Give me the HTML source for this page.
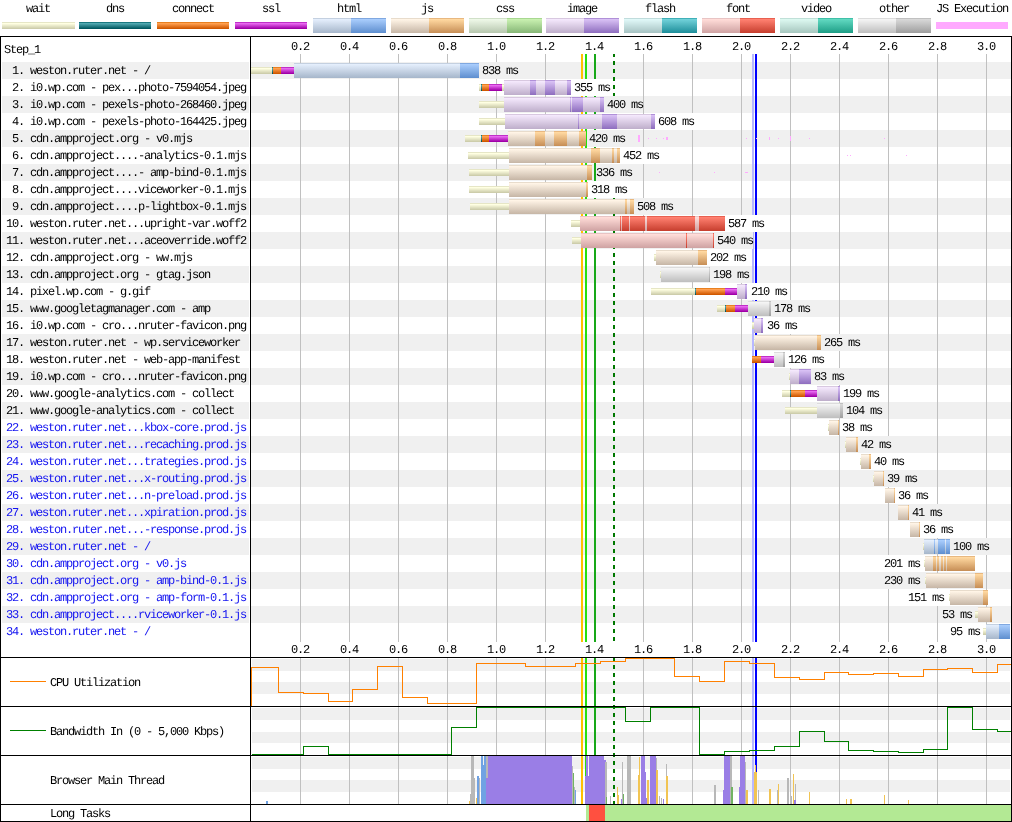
<!DOCTYPE html><html><head><meta charset="utf-8"><title>Waterfall</title><style>html,body{margin:0;padding:0;background:#fff;width:1012px;height:822px;overflow:hidden}svg{display:block;will-change:transform}text{white-space:pre;font-family:"Liberation Mono",monospace;text-rendering:geometricPrecision}</style></head><body><svg width="1012" height="822" viewBox="0 0 1012 822" shape-rendering="crispEdges" font-family='"Liberation Mono", monospace' font-size="12" letter-spacing="-1.2"><defs><linearGradient id="g_wait" x1="0" y1="0" x2="0" y2="1"><stop offset="0" stop-color="#e6e6c6"/><stop offset="0.0667" stop-color="#e6e6c6"/><stop offset="0.0668" stop-color="#ffffe2"/><stop offset="0.1" stop-color="#ffffe2"/><stop offset="0.9667" stop-color="#cdcdab"/><stop offset="1" stop-color="#cdcdab"/></linearGradient><linearGradient id="g_dns" x1="0" y1="0" x2="0" y2="1"><stop offset="0" stop-color="#1a7880"/><stop offset="0.0667" stop-color="#1a7880"/><stop offset="0.0668" stop-color="#50a8b0"/><stop offset="0.1" stop-color="#50a8b0"/><stop offset="0.9667" stop-color="#005860"/><stop offset="1" stop-color="#005860"/></linearGradient><linearGradient id="g_connect" x1="0" y1="0" x2="0" y2="1"><stop offset="0" stop-color="#e88020"/><stop offset="0.0667" stop-color="#e88020"/><stop offset="0.0668" stop-color="#ffa050"/><stop offset="0.1" stop-color="#ffa050"/><stop offset="0.9667" stop-color="#d05800"/><stop offset="1" stop-color="#d05800"/></linearGradient><linearGradient id="g_ssl" x1="0" y1="0" x2="0" y2="1"><stop offset="0" stop-color="#c030c8"/><stop offset="0.0667" stop-color="#c030c8"/><stop offset="0.0668" stop-color="#e868f0"/><stop offset="0.1" stop-color="#e868f0"/><stop offset="0.9667" stop-color="#a000a8"/><stop offset="1" stop-color="#a000a8"/></linearGradient><linearGradient id="g_html" x1="0" y1="0" x2="0" y2="1"><stop offset="0" stop-color="#c4d0e0"/><stop offset="0.0667" stop-color="#c4d0e0"/><stop offset="0.0668" stop-color="#e4eefc"/><stop offset="0.1" stop-color="#e4eefc"/><stop offset="0.9667" stop-color="#a8b8cc"/><stop offset="1" stop-color="#a8b8cc"/></linearGradient><linearGradient id="g_html_d" x1="0" y1="0" x2="0" y2="1"><stop offset="0" stop-color="#80a8e0"/><stop offset="0.0667" stop-color="#80a8e0"/><stop offset="0.0668" stop-color="#a8ccfc"/><stop offset="0.1" stop-color="#a8ccfc"/><stop offset="0.9667" stop-color="#6090d0"/><stop offset="1" stop-color="#6090d0"/></linearGradient><linearGradient id="g_js" x1="0" y1="0" x2="0" y2="1"><stop offset="0" stop-color="#e8dccc"/><stop offset="0.0667" stop-color="#e8dccc"/><stop offset="0.0668" stop-color="#fff4e6"/><stop offset="0.1" stop-color="#fff4e6"/><stop offset="0.9667" stop-color="#c8b8a8"/><stop offset="1" stop-color="#c8b8a8"/></linearGradient><linearGradient id="g_js_d" x1="0" y1="0" x2="0" y2="1"><stop offset="0" stop-color="#e8b880"/><stop offset="0.0667" stop-color="#e8b880"/><stop offset="0.0668" stop-color="#ffd8a0"/><stop offset="0.1" stop-color="#ffd8a0"/><stop offset="0.9667" stop-color="#c89058"/><stop offset="1" stop-color="#c89058"/></linearGradient><linearGradient id="g_css" x1="0" y1="0" x2="0" y2="1"><stop offset="0" stop-color="#d0e0c8"/><stop offset="0.0667" stop-color="#d0e0c8"/><stop offset="0.0668" stop-color="#eef8e8"/><stop offset="0.1" stop-color="#eef8e8"/><stop offset="0.9667" stop-color="#b8c8b0"/><stop offset="1" stop-color="#b8c8b0"/></linearGradient><linearGradient id="g_css_d" x1="0" y1="0" x2="0" y2="1"><stop offset="0" stop-color="#a8d890"/><stop offset="0.0667" stop-color="#a8d890"/><stop offset="0.0668" stop-color="#c8f0b0"/><stop offset="0.1" stop-color="#c8f0b0"/><stop offset="0.9667" stop-color="#88b878"/><stop offset="1" stop-color="#88b878"/></linearGradient><linearGradient id="g_image" x1="0" y1="0" x2="0" y2="1"><stop offset="0" stop-color="#d8c8e0"/><stop offset="0.0667" stop-color="#d8c8e0"/><stop offset="0.0668" stop-color="#f4e8fc"/><stop offset="0.1" stop-color="#f4e8fc"/><stop offset="0.9667" stop-color="#c0b0cc"/><stop offset="1" stop-color="#c0b0cc"/></linearGradient><linearGradient id="g_image_d" x1="0" y1="0" x2="0" y2="1"><stop offset="0" stop-color="#b090d8"/><stop offset="0.0667" stop-color="#b090d8"/><stop offset="0.0668" stop-color="#d8c0f4"/><stop offset="0.1" stop-color="#d8c0f4"/><stop offset="0.9667" stop-color="#9070c0"/><stop offset="1" stop-color="#9070c0"/></linearGradient><linearGradient id="g_flash" x1="0" y1="0" x2="0" y2="1"><stop offset="0" stop-color="#c0dcdc"/><stop offset="0.0667" stop-color="#c0dcdc"/><stop offset="0.0668" stop-color="#e0f8f8"/><stop offset="0.1" stop-color="#e0f8f8"/><stop offset="0.9667" stop-color="#a8c4c4"/><stop offset="1" stop-color="#a8c4c4"/></linearGradient><linearGradient id="g_flash_d" x1="0" y1="0" x2="0" y2="1"><stop offset="0" stop-color="#40b0b8"/><stop offset="0.0667" stop-color="#40b0b8"/><stop offset="0.0668" stop-color="#70d0d8"/><stop offset="0.1" stop-color="#70d0d8"/><stop offset="0.9667" stop-color="#20909c"/><stop offset="1" stop-color="#20909c"/></linearGradient><linearGradient id="g_font" x1="0" y1="0" x2="0" y2="1"><stop offset="0" stop-color="#e8c4c4"/><stop offset="0.0667" stop-color="#e8c4c4"/><stop offset="0.0668" stop-color="#ffdcd8"/><stop offset="0.1" stop-color="#ffdcd8"/><stop offset="0.9667" stop-color="#d0a4a4"/><stop offset="1" stop-color="#d0a4a4"/></linearGradient><linearGradient id="g_font_d" x1="0" y1="0" x2="0" y2="1"><stop offset="0" stop-color="#e86050"/><stop offset="0.0667" stop-color="#e86050"/><stop offset="0.0668" stop-color="#ff8070"/><stop offset="0.1" stop-color="#ff8070"/><stop offset="0.9667" stop-color="#c84030"/><stop offset="1" stop-color="#c84030"/></linearGradient><linearGradient id="g_video" x1="0" y1="0" x2="0" y2="1"><stop offset="0" stop-color="#c0e0d8"/><stop offset="0.0667" stop-color="#c0e0d8"/><stop offset="0.0668" stop-color="#dcf8f0"/><stop offset="0.1" stop-color="#dcf8f0"/><stop offset="0.9667" stop-color="#a8c8c0"/><stop offset="1" stop-color="#a8c8c0"/></linearGradient><linearGradient id="g_video_d" x1="0" y1="0" x2="0" y2="1"><stop offset="0" stop-color="#40c0a8"/><stop offset="0.0667" stop-color="#40c0a8"/><stop offset="0.0668" stop-color="#60d8c0"/><stop offset="0.1" stop-color="#60d8c0"/><stop offset="0.9667" stop-color="#20a088"/><stop offset="1" stop-color="#20a088"/></linearGradient><linearGradient id="g_other" x1="0" y1="0" x2="0" y2="1"><stop offset="0" stop-color="#dcdcdc"/><stop offset="0.0667" stop-color="#dcdcdc"/><stop offset="0.0668" stop-color="#f4f4f4"/><stop offset="0.1" stop-color="#f4f4f4"/><stop offset="0.9667" stop-color="#c0c0c0"/><stop offset="1" stop-color="#c0c0c0"/></linearGradient><linearGradient id="g_other_d" x1="0" y1="0" x2="0" y2="1"><stop offset="0" stop-color="#c0c0c0"/><stop offset="0.0667" stop-color="#c0c0c0"/><stop offset="0.0668" stop-color="#d8d8d8"/><stop offset="0.1" stop-color="#d8d8d8"/><stop offset="0.9667" stop-color="#a0a0a0"/><stop offset="1" stop-color="#a0a0a0"/></linearGradient><linearGradient id="s_wait" x1="0" y1="0" x2="0" y2="1"><stop offset="0" stop-color="#e6e6c6"/><stop offset="0.1428" stop-color="#e6e6c6"/><stop offset="0.143" stop-color="#ffffe2"/><stop offset="0.2143" stop-color="#ffffe2"/><stop offset="0.9286" stop-color="#cdcdab"/><stop offset="1" stop-color="#cdcdab"/></linearGradient><linearGradient id="s_dns" x1="0" y1="0" x2="0" y2="1"><stop offset="0" stop-color="#1a7880"/><stop offset="0.1428" stop-color="#1a7880"/><stop offset="0.143" stop-color="#50a8b0"/><stop offset="0.2143" stop-color="#50a8b0"/><stop offset="0.9286" stop-color="#005860"/><stop offset="1" stop-color="#005860"/></linearGradient><linearGradient id="s_connect" x1="0" y1="0" x2="0" y2="1"><stop offset="0" stop-color="#e88020"/><stop offset="0.1428" stop-color="#e88020"/><stop offset="0.143" stop-color="#ffa050"/><stop offset="0.2143" stop-color="#ffa050"/><stop offset="0.9286" stop-color="#d05800"/><stop offset="1" stop-color="#d05800"/></linearGradient><linearGradient id="s_ssl" x1="0" y1="0" x2="0" y2="1"><stop offset="0" stop-color="#c030c8"/><stop offset="0.1428" stop-color="#c030c8"/><stop offset="0.143" stop-color="#e868f0"/><stop offset="0.2143" stop-color="#e868f0"/><stop offset="0.9286" stop-color="#a000a8"/><stop offset="1" stop-color="#a000a8"/></linearGradient></defs><text x="26" y="12" fill="#000">wait</text><rect x="2" y="22" width="73" height="7" fill="url(#s_wait)"/><text x="106" y="12" fill="#000">dns</text><rect x="79" y="22" width="72" height="7" fill="url(#s_dns)"/><text x="172" y="12" fill="#000">connect</text><rect x="157" y="22" width="72" height="7" fill="url(#s_connect)"/><text x="262" y="12" fill="#000">ssl</text><rect x="235" y="22" width="72" height="7" fill="url(#s_ssl)"/><text x="337" y="12" fill="#000">html</text><rect x="313" y="18" width="38" height="15" fill="url(#g_html)"/><rect x="351" y="18" width="35" height="15" fill="url(#g_html_d)"/><text x="421" y="12" fill="#000">js</text><rect x="391" y="18" width="38" height="15" fill="url(#g_js)"/><rect x="429" y="18" width="35" height="15" fill="url(#g_js_d)"/><text x="496" y="12" fill="#000">css</text><rect x="469" y="18" width="38" height="15" fill="url(#g_css)"/><rect x="507" y="18" width="35" height="15" fill="url(#g_css_d)"/><text x="567" y="12" fill="#000">image</text><rect x="546" y="18" width="38" height="15" fill="url(#g_image)"/><rect x="584" y="18" width="35" height="15" fill="url(#g_image_d)"/><text x="645" y="12" fill="#000">flash</text><rect x="624" y="18" width="38" height="15" fill="url(#g_flash)"/><rect x="662" y="18" width="35" height="15" fill="url(#g_flash_d)"/><text x="726" y="12" fill="#000">font</text><rect x="702" y="18" width="38" height="15" fill="url(#g_font)"/><rect x="740" y="18" width="35" height="15" fill="url(#g_font_d)"/><text x="801" y="12" fill="#000">video</text><rect x="780" y="18" width="38" height="15" fill="url(#g_video)"/><rect x="818" y="18" width="35" height="15" fill="url(#g_video_d)"/><text x="879" y="12" fill="#000">other</text><rect x="858" y="18" width="38" height="15" fill="url(#g_other)"/><rect x="896" y="18" width="35" height="15" fill="url(#g_other_d)"/><text x="936" y="12" fill="#000">JS Execution</text><rect x="936" y="22" width="72" height="7" fill="#ffaaff"/><rect x="2" y="62" width="247" height="17" fill="#f0f0f0"/><rect x="251" y="62" width="760" height="17" fill="#f0f0f0"/><rect x="2" y="96" width="247" height="17" fill="#f0f0f0"/><rect x="251" y="96" width="760" height="17" fill="#f0f0f0"/><rect x="2" y="130" width="247" height="17" fill="#f0f0f0"/><rect x="251" y="130" width="760" height="17" fill="#f0f0f0"/><rect x="2" y="164" width="247" height="17" fill="#f0f0f0"/><rect x="251" y="164" width="760" height="17" fill="#f0f0f0"/><rect x="2" y="198" width="247" height="17" fill="#f0f0f0"/><rect x="251" y="198" width="760" height="17" fill="#f0f0f0"/><rect x="2" y="232" width="247" height="17" fill="#f0f0f0"/><rect x="251" y="232" width="760" height="17" fill="#f0f0f0"/><rect x="2" y="266" width="247" height="17" fill="#f0f0f0"/><rect x="251" y="266" width="760" height="17" fill="#f0f0f0"/><rect x="2" y="300" width="247" height="17" fill="#f0f0f0"/><rect x="251" y="300" width="760" height="17" fill="#f0f0f0"/><rect x="2" y="334" width="247" height="17" fill="#f0f0f0"/><rect x="251" y="334" width="760" height="17" fill="#f0f0f0"/><rect x="2" y="368" width="247" height="17" fill="#f0f0f0"/><rect x="251" y="368" width="760" height="17" fill="#f0f0f0"/><rect x="2" y="402" width="247" height="17" fill="#f0f0f0"/><rect x="251" y="402" width="760" height="17" fill="#f0f0f0"/><rect x="2" y="436" width="247" height="17" fill="#f0f0f0"/><rect x="251" y="436" width="760" height="17" fill="#f0f0f0"/><rect x="2" y="470" width="247" height="17" fill="#f0f0f0"/><rect x="251" y="470" width="760" height="17" fill="#f0f0f0"/><rect x="2" y="504" width="247" height="17" fill="#f0f0f0"/><rect x="251" y="504" width="760" height="17" fill="#f0f0f0"/><rect x="2" y="538" width="247" height="17" fill="#f0f0f0"/><rect x="251" y="538" width="760" height="17" fill="#f0f0f0"/><rect x="2" y="572" width="247" height="17" fill="#f0f0f0"/><rect x="251" y="572" width="760" height="17" fill="#f0f0f0"/><rect x="2" y="606" width="247" height="17" fill="#f0f0f0"/><rect x="251" y="606" width="760" height="17" fill="#f0f0f0"/><rect x="252" y="659" width="758" height="12" fill="#f0f0f0"/><rect x="252" y="682" width="758" height="12" fill="#f0f0f0"/><rect x="252" y="708" width="758" height="12" fill="#f0f0f0"/><rect x="252" y="732" width="758" height="11" fill="#f0f0f0"/><rect x="252" y="757" width="758" height="12" fill="#f0f0f0"/><rect x="252" y="780" width="758" height="12" fill="#f0f0f0"/><rect x="300" y="54" width="1" height="588" fill="#c0c0c0"/><rect x="300" y="658" width="1" height="146" fill="#c0c0c0"/><rect x="349" y="54" width="1" height="588" fill="#c0c0c0"/><rect x="349" y="658" width="1" height="146" fill="#c0c0c0"/><rect x="398" y="54" width="1" height="588" fill="#c0c0c0"/><rect x="398" y="658" width="1" height="146" fill="#c0c0c0"/><rect x="447" y="54" width="1" height="588" fill="#c0c0c0"/><rect x="447" y="658" width="1" height="146" fill="#c0c0c0"/><rect x="496" y="54" width="1" height="588" fill="#c0c0c0"/><rect x="496" y="658" width="1" height="146" fill="#c0c0c0"/><rect x="545" y="54" width="1" height="588" fill="#c0c0c0"/><rect x="545" y="658" width="1" height="146" fill="#c0c0c0"/><rect x="594" y="54" width="1" height="588" fill="#c0c0c0"/><rect x="594" y="658" width="1" height="146" fill="#c0c0c0"/><rect x="643" y="54" width="1" height="588" fill="#c0c0c0"/><rect x="643" y="658" width="1" height="146" fill="#c0c0c0"/><rect x="692" y="54" width="1" height="588" fill="#c0c0c0"/><rect x="692" y="658" width="1" height="146" fill="#c0c0c0"/><rect x="741" y="54" width="1" height="588" fill="#c0c0c0"/><rect x="741" y="658" width="1" height="146" fill="#c0c0c0"/><rect x="790" y="54" width="1" height="588" fill="#c0c0c0"/><rect x="790" y="658" width="1" height="146" fill="#c0c0c0"/><rect x="839" y="54" width="1" height="588" fill="#c0c0c0"/><rect x="839" y="658" width="1" height="146" fill="#c0c0c0"/><rect x="888" y="54" width="1" height="588" fill="#c0c0c0"/><rect x="888" y="658" width="1" height="146" fill="#c0c0c0"/><rect x="937" y="54" width="1" height="588" fill="#c0c0c0"/><rect x="937" y="658" width="1" height="146" fill="#c0c0c0"/><rect x="986" y="54" width="1" height="588" fill="#c0c0c0"/><rect x="986" y="658" width="1" height="146" fill="#c0c0c0"/><rect x="581" y="54" width="2" height="588" fill="#ffc000"/><rect x="581" y="657" width="2" height="147" fill="#ffc000"/><rect x="585" y="54" width="2" height="588" fill="#28e010"/><rect x="585" y="657" width="2" height="147" fill="#28e010"/><rect x="594" y="54" width="2" height="588" fill="#18a818"/><rect x="594" y="657" width="2" height="147" fill="#18a818"/><rect x="613" y="54" width="2" height="3" fill="#007800"/><rect x="613" y="61" width="2" height="4" fill="#007800"/><rect x="613" y="69" width="2" height="4" fill="#007800"/><rect x="613" y="77" width="2" height="4" fill="#007800"/><rect x="613" y="85" width="2" height="4" fill="#007800"/><rect x="613" y="93" width="2" height="4" fill="#007800"/><rect x="613" y="101" width="2" height="4" fill="#007800"/><rect x="613" y="109" width="2" height="4" fill="#007800"/><rect x="613" y="117" width="2" height="4" fill="#007800"/><rect x="613" y="125" width="2" height="4" fill="#007800"/><rect x="613" y="133" width="2" height="4" fill="#007800"/><rect x="613" y="141" width="2" height="4" fill="#007800"/><rect x="613" y="149" width="2" height="4" fill="#007800"/><rect x="613" y="157" width="2" height="4" fill="#007800"/><rect x="613" y="165" width="2" height="4" fill="#007800"/><rect x="613" y="173" width="2" height="4" fill="#007800"/><rect x="613" y="181" width="2" height="4" fill="#007800"/><rect x="613" y="189" width="2" height="4" fill="#007800"/><rect x="613" y="197" width="2" height="4" fill="#007800"/><rect x="613" y="205" width="2" height="4" fill="#007800"/><rect x="613" y="213" width="2" height="4" fill="#007800"/><rect x="613" y="221" width="2" height="4" fill="#007800"/><rect x="613" y="229" width="2" height="4" fill="#007800"/><rect x="613" y="237" width="2" height="4" fill="#007800"/><rect x="613" y="245" width="2" height="4" fill="#007800"/><rect x="613" y="253" width="2" height="4" fill="#007800"/><rect x="613" y="261" width="2" height="4" fill="#007800"/><rect x="613" y="269" width="2" height="4" fill="#007800"/><rect x="613" y="277" width="2" height="4" fill="#007800"/><rect x="613" y="285" width="2" height="4" fill="#007800"/><rect x="613" y="293" width="2" height="4" fill="#007800"/><rect x="613" y="301" width="2" height="4" fill="#007800"/><rect x="613" y="309" width="2" height="4" fill="#007800"/><rect x="613" y="317" width="2" height="4" fill="#007800"/><rect x="613" y="325" width="2" height="4" fill="#007800"/><rect x="613" y="333" width="2" height="4" fill="#007800"/><rect x="613" y="341" width="2" height="4" fill="#007800"/><rect x="613" y="349" width="2" height="4" fill="#007800"/><rect x="613" y="357" width="2" height="4" fill="#007800"/><rect x="613" y="365" width="2" height="4" fill="#007800"/><rect x="613" y="373" width="2" height="4" fill="#007800"/><rect x="613" y="381" width="2" height="4" fill="#007800"/><rect x="613" y="389" width="2" height="4" fill="#007800"/><rect x="613" y="397" width="2" height="4" fill="#007800"/><rect x="613" y="405" width="2" height="4" fill="#007800"/><rect x="613" y="413" width="2" height="4" fill="#007800"/><rect x="613" y="421" width="2" height="4" fill="#007800"/><rect x="613" y="429" width="2" height="4" fill="#007800"/><rect x="613" y="437" width="2" height="4" fill="#007800"/><rect x="613" y="445" width="2" height="4" fill="#007800"/><rect x="613" y="453" width="2" height="4" fill="#007800"/><rect x="613" y="461" width="2" height="4" fill="#007800"/><rect x="613" y="469" width="2" height="4" fill="#007800"/><rect x="613" y="477" width="2" height="4" fill="#007800"/><rect x="613" y="485" width="2" height="4" fill="#007800"/><rect x="613" y="493" width="2" height="4" fill="#007800"/><rect x="613" y="501" width="2" height="4" fill="#007800"/><rect x="613" y="509" width="2" height="4" fill="#007800"/><rect x="613" y="517" width="2" height="4" fill="#007800"/><rect x="613" y="525" width="2" height="4" fill="#007800"/><rect x="613" y="533" width="2" height="4" fill="#007800"/><rect x="613" y="541" width="2" height="4" fill="#007800"/><rect x="613" y="549" width="2" height="4" fill="#007800"/><rect x="613" y="557" width="2" height="4" fill="#007800"/><rect x="613" y="565" width="2" height="4" fill="#007800"/><rect x="613" y="573" width="2" height="4" fill="#007800"/><rect x="613" y="581" width="2" height="4" fill="#007800"/><rect x="613" y="589" width="2" height="4" fill="#007800"/><rect x="613" y="597" width="2" height="4" fill="#007800"/><rect x="613" y="605" width="2" height="4" fill="#007800"/><rect x="613" y="613" width="2" height="4" fill="#007800"/><rect x="613" y="621" width="2" height="4" fill="#007800"/><rect x="613" y="629" width="2" height="4" fill="#007800"/><rect x="613" y="637" width="2" height="4" fill="#007800"/><rect x="613" y="657" width="2" height="4" fill="#007800"/><rect x="613" y="665" width="2" height="4" fill="#007800"/><rect x="613" y="673" width="2" height="4" fill="#007800"/><rect x="613" y="681" width="2" height="4" fill="#007800"/><rect x="613" y="689" width="2" height="4" fill="#007800"/><rect x="613" y="697" width="2" height="4" fill="#007800"/><rect x="613" y="705" width="2" height="4" fill="#007800"/><rect x="613" y="713" width="2" height="4" fill="#007800"/><rect x="613" y="721" width="2" height="4" fill="#007800"/><rect x="613" y="729" width="2" height="4" fill="#007800"/><rect x="613" y="737" width="2" height="4" fill="#007800"/><rect x="613" y="745" width="2" height="4" fill="#007800"/><rect x="613" y="753" width="2" height="4" fill="#007800"/><rect x="613" y="761" width="2" height="4" fill="#007800"/><rect x="613" y="769" width="2" height="4" fill="#007800"/><rect x="613" y="777" width="2" height="4" fill="#007800"/><rect x="613" y="785" width="2" height="4" fill="#007800"/><rect x="613" y="793" width="2" height="4" fill="#007800"/><rect x="613" y="801" width="2" height="3" fill="#007800"/><rect x="752" y="54" width="2" height="588" fill="#b8b8ff"/><rect x="752" y="657" width="2" height="147" fill="#b8b8ff"/><rect x="755" y="54" width="2" height="588" fill="#0000ff"/><rect x="755" y="657" width="2" height="147" fill="#0000ff"/><!--bars--><rect x="251" y="67" width="21" height="7" fill="url(#s_wait)"/><rect x="272" y="67" width="1" height="7" fill="url(#s_dns)"/><rect x="273" y="67" width="8" height="7" fill="url(#s_connect)"/><rect x="281" y="67" width="13" height="7" fill="url(#s_ssl)"/><rect x="294" y="63" width="185" height="15" fill="url(#g_html)"/><rect x="460" y="63" width="19" height="15" fill="url(#g_html_d)"/><rect x="482" y="62" width="36" height="17" fill="#f0f0f0"/><text x="482" y="74" fill="#000">838 ms</text><text x="6" y="74" fill="#000"> 1. weston.ruter.net - /</text><rect x="479" y="84" width="2" height="7" fill="url(#s_wait)"/><rect x="481" y="84" width="1" height="7" fill="url(#s_dns)"/><rect x="482" y="84" width="7" height="7" fill="url(#s_connect)"/><rect x="489" y="84" width="13" height="7" fill="url(#s_ssl)"/><rect x="502" y="84" width="2" height="7" fill="url(#s_wait)"/><rect x="504" y="80" width="67" height="15" fill="url(#g_image)"/><rect x="530" y="80" width="6" height="15" fill="url(#g_image_d)"/><rect x="545" y="80" width="10" height="15" fill="url(#g_image_d)"/><rect x="567" y="80" width="4" height="15" fill="url(#g_image_d)"/><rect x="574" y="79" width="36" height="17" fill="#ffffff"/><text x="574" y="91" fill="#000">355 ms</text><text x="6" y="91" fill="#000"> 2. i0.wp.com - pex...photo-7594054.jpeg</text><rect x="479" y="101" width="25" height="7" fill="url(#s_wait)"/><rect x="504" y="97" width="100" height="15" fill="url(#g_image)"/><rect x="570" y="97" width="1" height="15" fill="url(#g_image_d)"/><rect x="572" y="97" width="11" height="15" fill="url(#g_image_d)"/><rect x="600" y="97" width="4" height="15" fill="url(#g_image_d)"/><rect x="607" y="96" width="36" height="17" fill="#f0f0f0"/><text x="607" y="108" fill="#000">400 ms</text><text x="6" y="108" fill="#000"> 3. i0.wp.com - pexels-photo-268460.jpeg</text><rect x="479" y="118" width="26" height="7" fill="url(#s_wait)"/><rect x="505" y="114" width="150" height="15" fill="url(#g_image)"/><rect x="578" y="114" width="1" height="15" fill="url(#g_image_d)"/><rect x="602" y="114" width="15" height="15" fill="url(#g_image_d)"/><rect x="651" y="114" width="4" height="15" fill="url(#g_image_d)"/><rect x="658" y="113" width="36" height="17" fill="#ffffff"/><text x="658" y="125" fill="#000">608 ms</text><text x="6" y="125" fill="#000"> 4. i0.wp.com - pexels-photo-164425.jpeg</text><rect x="465" y="135" width="16" height="7" fill="url(#s_wait)"/><rect x="481" y="135" width="1" height="7" fill="url(#s_dns)"/><rect x="482" y="135" width="7" height="7" fill="url(#s_connect)"/><rect x="489" y="135" width="19" height="7" fill="url(#s_ssl)"/><rect x="508" y="131" width="78" height="15" fill="url(#g_js)"/><rect x="535" y="131" width="10" height="15" fill="url(#g_js_d)"/><rect x="554" y="131" width="13" height="15" fill="url(#g_js_d)"/><rect x="579" y="131" width="7" height="15" fill="url(#g_js_d)"/><rect x="589" y="130" width="36" height="17" fill="#f0f0f0"/><text x="589" y="142" fill="#000">420 ms</text><text x="6" y="142" fill="#000"> 5. cdn.ampproject.org - v0.mjs</text><rect x="468" y="152" width="41" height="7" fill="url(#s_wait)"/><rect x="509" y="148" width="111" height="15" fill="url(#g_js)"/><rect x="591" y="148" width="9" height="15" fill="url(#g_js_d)"/><rect x="612" y="148" width="2" height="15" fill="url(#g_js_d)"/><rect x="617" y="148" width="3" height="15" fill="url(#g_js_d)"/><rect x="623" y="147" width="36" height="17" fill="#ffffff"/><text x="623" y="159" fill="#000">452 ms</text><text x="6" y="159" fill="#000"> 6. cdn.ampproject....-analytics-0.1.mjs</text><rect x="469" y="169" width="40" height="7" fill="url(#s_wait)"/><rect x="509" y="165" width="83" height="15" fill="url(#g_js)"/><rect x="587" y="165" width="5" height="15" fill="url(#g_js_d)"/><rect x="596" y="164" width="36" height="17" fill="#f0f0f0"/><text x="596" y="176" fill="#000">336 ms</text><text x="6" y="176" fill="#000"> 7. cdn.ampproject....- amp-bind-0.1.mjs</text><rect x="469" y="186" width="40" height="7" fill="url(#s_wait)"/><rect x="509" y="182" width="79" height="15" fill="url(#g_js)"/><rect x="586" y="182" width="2" height="15" fill="url(#g_js_d)"/><rect x="591" y="181" width="36" height="17" fill="#ffffff"/><text x="591" y="193" fill="#000">318 ms</text><text x="6" y="193" fill="#000"> 8. cdn.ampproject....viceworker-0.1.mjs</text><rect x="470" y="203" width="39" height="7" fill="url(#s_wait)"/><rect x="509" y="199" width="125" height="15" fill="url(#g_js)"/><rect x="625" y="199" width="2" height="15" fill="url(#g_js_d)"/><rect x="630" y="199" width="4" height="15" fill="url(#g_js_d)"/><rect x="637" y="198" width="36" height="17" fill="#f0f0f0"/><text x="637" y="210" fill="#000">508 ms</text><text x="6" y="210" fill="#000"> 9. cdn.ampproject....p-lightbox-0.1.mjs</text><rect x="571" y="220" width="10" height="7" fill="url(#s_wait)"/><rect x="580" y="216" width="145" height="15" fill="url(#g_font)"/><rect x="620" y="216" width="1" height="15" fill="url(#g_font_d)"/><rect x="622" y="216" width="7" height="15" fill="url(#g_font_d)"/><rect x="630" y="216" width="15" height="15" fill="url(#g_font_d)"/><rect x="647" y="216" width="48" height="15" fill="url(#g_font_d)"/><rect x="699" y="216" width="26" height="15" fill="url(#g_font_d)"/><rect x="728" y="215" width="36" height="17" fill="#ffffff"/><text x="728" y="227" fill="#000">587 ms</text><text x="6" y="227" fill="#000">10. weston.ruter.net...upright-var.woff2</text><rect x="572" y="237" width="10" height="7" fill="url(#s_wait)"/><rect x="581" y="233" width="133" height="15" fill="url(#g_font)"/><rect x="686" y="233" width="1" height="15" fill="url(#g_font_d)"/><rect x="713" y="233" width="1" height="15" fill="url(#g_font_d)"/><rect x="717" y="232" width="36" height="17" fill="#f0f0f0"/><text x="717" y="244" fill="#000">540 ms</text><text x="6" y="244" fill="#000">11. weston.ruter.net...aceoverride.woff2</text><rect x="654" y="254" width="3" height="7" fill="url(#s_wait)"/><rect x="656" y="250" width="51" height="15" fill="url(#g_js)"/><rect x="698" y="250" width="9" height="15" fill="url(#g_js_d)"/><rect x="710" y="249" width="36" height="17" fill="#ffffff"/><text x="710" y="261" fill="#000">202 ms</text><text x="6" y="261" fill="#000">12. cdn.ampproject.org - ww.mjs</text><rect x="660" y="271" width="2" height="7" fill="url(#s_wait)"/><rect x="661" y="267" width="49" height="15" fill="url(#g_other)"/><rect x="709" y="267" width="1" height="15" fill="url(#g_other_d)"/><rect x="713" y="266" width="36" height="17" fill="#f0f0f0"/><text x="713" y="278" fill="#000">198 ms</text><text x="6" y="278" fill="#000">13. cdn.ampproject.org - gtag.json</text><rect x="651" y="288" width="44" height="7" fill="url(#s_wait)"/><rect x="695" y="288" width="1" height="7" fill="url(#s_dns)"/><rect x="696" y="288" width="29" height="7" fill="url(#s_connect)"/><rect x="725" y="288" width="12" height="7" fill="url(#s_ssl)"/><rect x="737" y="284" width="10" height="15" fill="url(#g_image)"/><rect x="745" y="284" width="2" height="15" fill="url(#g_image_d)"/><rect x="751" y="283" width="36" height="17" fill="#ffffff"/><text x="751" y="295" fill="#000">210 ms</text><text x="6" y="295" fill="#000">14. pixel.wp.com - g.gif</text><rect x="717" y="305" width="8" height="7" fill="url(#s_wait)"/><rect x="725" y="305" width="1" height="7" fill="url(#s_dns)"/><rect x="726" y="305" width="9" height="7" fill="url(#s_connect)"/><rect x="735" y="305" width="13" height="7" fill="url(#s_ssl)"/><rect x="748" y="301" width="23" height="15" fill="url(#g_other)"/><rect x="769" y="301" width="2" height="15" fill="url(#g_other_d)"/><rect x="774" y="300" width="36" height="17" fill="#f0f0f0"/><text x="774" y="312" fill="#000">178 ms</text><text x="6" y="312" fill="#000">15. www.googletagmanager.com - amp</text><rect x="752" y="322" width="2" height="7" fill="url(#s_wait)"/><rect x="754" y="318" width="9" height="15" fill="url(#g_image)"/><rect x="761" y="318" width="2" height="15" fill="url(#g_image_d)"/><rect x="767" y="317" width="30" height="17" fill="#ffffff"/><text x="767" y="329" fill="#000">36 ms</text><text x="6" y="329" fill="#000">16. i0.wp.com - cro...nruter-favicon.png</text><rect x="754" y="339" width="2" height="7" fill="url(#s_wait)"/><rect x="755" y="335" width="66" height="15" fill="url(#g_js)"/><rect x="817" y="335" width="4" height="15" fill="url(#g_js_d)"/><rect x="824" y="334" width="36" height="17" fill="#f0f0f0"/><text x="824" y="346" fill="#000">265 ms</text><text x="6" y="346" fill="#000">17. weston.ruter.net - wp.serviceworker</text><rect x="752" y="356" width="9" height="7" fill="url(#s_connect)"/><rect x="761" y="356" width="14" height="7" fill="url(#s_ssl)"/><rect x="774" y="352" width="11" height="15" fill="url(#g_other)"/><rect x="783" y="352" width="2" height="15" fill="url(#g_other_d)"/><rect x="788" y="351" width="36" height="17" fill="#ffffff"/><text x="788" y="363" fill="#000">126 ms</text><text x="6" y="363" fill="#000">18. weston.ruter.net - web-app-manifest</text><rect x="789" y="373" width="2" height="7" fill="url(#s_wait)"/><rect x="790" y="369" width="21" height="15" fill="url(#g_image)"/><rect x="799" y="369" width="12" height="15" fill="url(#g_image_d)"/><rect x="814" y="368" width="30" height="17" fill="#f0f0f0"/><text x="814" y="380" fill="#000">83 ms</text><text x="6" y="380" fill="#000">19. i0.wp.com - cro...nruter-favicon.png</text><rect x="782" y="390" width="8" height="7" fill="url(#s_wait)"/><rect x="790" y="390" width="1" height="7" fill="url(#s_dns)"/><rect x="791" y="390" width="14" height="7" fill="url(#s_connect)"/><rect x="805" y="390" width="12" height="7" fill="url(#s_ssl)"/><rect x="817" y="386" width="23" height="15" fill="url(#g_image)"/><rect x="838" y="386" width="2" height="15" fill="url(#g_image_d)"/><rect x="843" y="385" width="36" height="17" fill="#ffffff"/><text x="843" y="397" fill="#000">199 ms</text><text x="6" y="397" fill="#000">20. www.google-analytics.com - collect</text><rect x="785" y="407" width="32" height="7" fill="url(#s_wait)"/><rect x="817" y="403" width="26" height="15" fill="url(#g_other)"/><rect x="840" y="403" width="3" height="15" fill="url(#g_other_d)"/><rect x="846" y="402" width="36" height="17" fill="#f0f0f0"/><text x="846" y="414" fill="#000">104 ms</text><text x="6" y="414" fill="#000">21. www.google-analytics.com - collect</text><rect x="828" y="424" width="2" height="7" fill="url(#s_wait)"/><rect x="829" y="420" width="10" height="15" fill="url(#g_js)"/><rect x="838" y="420" width="1" height="15" fill="url(#g_js_d)"/><rect x="842" y="419" width="30" height="17" fill="#ffffff"/><text x="842" y="431" fill="#000">38 ms</text><text x="6" y="431" fill="#1414f0">22. weston.ruter.net...kbox-core.prod.js</text><rect x="845" y="441" width="2" height="7" fill="url(#s_wait)"/><rect x="846" y="437" width="12" height="15" fill="url(#g_js)"/><rect x="856" y="437" width="2" height="15" fill="url(#g_js_d)"/><rect x="861" y="436" width="30" height="17" fill="#f0f0f0"/><text x="861" y="448" fill="#000">42 ms</text><text x="6" y="448" fill="#1414f0">23. weston.ruter.net...recaching.prod.js</text><rect x="860" y="458" width="2" height="7" fill="url(#s_wait)"/><rect x="861" y="454" width="10" height="15" fill="url(#g_js)"/><rect x="869" y="454" width="2" height="15" fill="url(#g_js_d)"/><rect x="874" y="453" width="30" height="17" fill="#ffffff"/><text x="874" y="465" fill="#000">40 ms</text><text x="6" y="465" fill="#1414f0">24. weston.ruter.net...trategies.prod.js</text><rect x="873" y="475" width="2" height="7" fill="url(#s_wait)"/><rect x="874" y="471" width="10" height="15" fill="url(#g_js)"/><rect x="883" y="471" width="1" height="15" fill="url(#g_js_d)"/><rect x="887" y="470" width="30" height="17" fill="#f0f0f0"/><text x="887" y="482" fill="#000">39 ms</text><text x="6" y="482" fill="#1414f0">25. weston.ruter.net...x-routing.prod.js</text><rect x="885" y="488" width="10" height="15" fill="url(#g_js)"/><rect x="894" y="488" width="1" height="15" fill="url(#g_js_d)"/><rect x="898" y="487" width="30" height="17" fill="#ffffff"/><text x="898" y="499" fill="#000">36 ms</text><text x="6" y="499" fill="#1414f0">26. weston.ruter.net...n-preload.prod.js</text><rect x="898" y="505" width="11" height="15" fill="url(#g_js)"/><rect x="908" y="505" width="1" height="15" fill="url(#g_js_d)"/><rect x="912" y="504" width="30" height="17" fill="#f0f0f0"/><text x="912" y="516" fill="#000">41 ms</text><text x="6" y="516" fill="#1414f0">27. weston.ruter.net...xpiration.prod.js</text><rect x="910" y="522" width="10" height="15" fill="url(#g_js)"/><rect x="919" y="522" width="1" height="15" fill="url(#g_js_d)"/><rect x="923" y="521" width="30" height="17" fill="#ffffff"/><text x="923" y="533" fill="#000">36 ms</text><text x="6" y="533" fill="#1414f0">28. weston.ruter.net...-response.prod.js</text><rect x="923" y="543" width="2" height="7" fill="url(#s_wait)"/><rect x="924" y="539" width="26" height="15" fill="url(#g_html)"/><rect x="934" y="539" width="1" height="15" fill="url(#g_html_d)"/><rect x="938" y="539" width="7" height="15" fill="url(#g_html_d)"/><rect x="946" y="539" width="4" height="15" fill="url(#g_html_d)"/><rect x="953" y="538" width="36" height="17" fill="#f0f0f0"/><text x="953" y="550" fill="#000">100 ms</text><text x="6" y="550" fill="#1414f0">29. weston.ruter.net - /</text><rect x="924" y="560" width="2" height="7" fill="url(#s_wait)"/><rect x="925" y="556" width="50" height="15" fill="url(#g_js)"/><rect x="933" y="556" width="3" height="15" fill="url(#g_js_d)"/><rect x="937" y="556" width="2" height="15" fill="url(#g_js_d)"/><rect x="941" y="556" width="2" height="15" fill="url(#g_js_d)"/><rect x="944" y="556" width="2" height="15" fill="url(#g_js_d)"/><rect x="947" y="556" width="28" height="15" fill="url(#g_js_d)"/><rect x="884" y="555" width="36" height="17" fill="#ffffff"/><text x="884" y="567" fill="#000">201 ms</text><text x="6" y="567" fill="#1414f0">30. cdn.ampproject.org - v0.js</text><rect x="925" y="577" width="2" height="7" fill="url(#s_wait)"/><rect x="926" y="573" width="57" height="15" fill="url(#g_js)"/><rect x="975" y="573" width="8" height="15" fill="url(#g_js_d)"/><rect x="884" y="572" width="36" height="17" fill="#f0f0f0"/><text x="884" y="584" fill="#000">230 ms</text><text x="6" y="584" fill="#1414f0">31. cdn.ampproject.org - amp-bind-0.1.js</text><rect x="949" y="594" width="2" height="7" fill="url(#s_wait)"/><rect x="950" y="590" width="38" height="15" fill="url(#g_js)"/><rect x="983" y="590" width="5" height="15" fill="url(#g_js_d)"/><rect x="908" y="589" width="36" height="17" fill="#ffffff"/><text x="908" y="601" fill="#000">151 ms</text><text x="6" y="601" fill="#1414f0">32. cdn.ampproject.org - amp-form-0.1.js</text><rect x="975" y="611" width="3" height="7" fill="url(#s_wait)"/><rect x="978" y="607" width="14" height="15" fill="url(#g_js)"/><rect x="990" y="607" width="2" height="15" fill="url(#g_js_d)"/><rect x="942" y="606" width="30" height="17" fill="#f0f0f0"/><text x="942" y="618" fill="#000">53 ms</text><text x="6" y="618" fill="#1414f0">33. cdn.ampproject....rviceworker-0.1.js</text><rect x="983" y="628" width="3" height="7" fill="url(#s_wait)"/><rect x="986" y="624" width="24" height="15" fill="url(#g_html)"/><rect x="999" y="624" width="11" height="15" fill="url(#g_html_d)"/><rect x="950" y="623" width="30" height="17" fill="#ffffff"/><text x="950" y="635" fill="#000">95 ms</text><text x="6" y="635" fill="#1414f0">34. weston.ruter.net - /</text><!--labels--><text x="4" y="53" fill="#000">Step_1</text><text x="291" y="50" fill="#000">0.2</text><text x="291" y="653" fill="#000">0.2</text><text x="340" y="50" fill="#000">0.4</text><text x="340" y="653" fill="#000">0.4</text><text x="389" y="50" fill="#000">0.6</text><text x="389" y="653" fill="#000">0.6</text><text x="438" y="50" fill="#000">0.8</text><text x="438" y="653" fill="#000">0.8</text><text x="487" y="50" fill="#000">1.0</text><text x="487" y="653" fill="#000">1.0</text><text x="536" y="50" fill="#000">1.2</text><text x="536" y="653" fill="#000">1.2</text><text x="585" y="50" fill="#000">1.4</text><text x="585" y="653" fill="#000">1.4</text><text x="634" y="50" fill="#000">1.6</text><text x="634" y="653" fill="#000">1.6</text><text x="683" y="50" fill="#000">1.8</text><text x="683" y="653" fill="#000">1.8</text><text x="732" y="50" fill="#000">2.0</text><text x="732" y="653" fill="#000">2.0</text><text x="781" y="50" fill="#000">2.2</text><text x="781" y="653" fill="#000">2.2</text><text x="830" y="50" fill="#000">2.4</text><text x="830" y="653" fill="#000">2.4</text><text x="879" y="50" fill="#000">2.6</text><text x="879" y="653" fill="#000">2.6</text><text x="928" y="50" fill="#000">2.8</text><text x="928" y="653" fill="#000">2.8</text><text x="977" y="50" fill="#000">3.0</text><text x="977" y="653" fill="#000">3.0</text><rect x="638" y="135" width="2" height="7" fill="#ffaaff"/><rect x="648" y="138" width="1" height="1" fill="#ffaaff"/><rect x="656" y="138" width="1" height="1" fill="#ffaaff"/><rect x="663" y="138" width="1" height="1" fill="#ffaaff"/><rect x="666" y="137" width="2" height="3" fill="#ffaaff"/><rect x="746" y="138" width="1" height="1" fill="#ffaaff"/><rect x="756" y="138" width="1" height="1" fill="#ffaaff"/><rect x="769" y="137" width="1" height="3" fill="#ffaaff"/><rect x="778" y="138" width="1" height="1" fill="#ffaaff"/><rect x="790" y="136" width="1" height="5" fill="#ffaaff"/><rect x="809" y="138" width="1" height="1" fill="#ffaaff"/><rect x="884" y="138" width="1" height="1" fill="#ffaaff"/><rect x="847" y="155" width="1" height="1" fill="#ffaaff"/><rect x="850" y="155" width="1" height="1" fill="#ffaaff"/><rect x="906" y="155" width="1" height="1" fill="#ffaaff"/><rect x="659" y="172" width="1" height="1" fill="#ffaaff"/><rect x="714" y="172" width="1" height="1" fill="#ffaaff"/><rect x="745" y="172" width="3" height="1" fill="#ffaaff"/><polyline fill="none" stroke="#ff8000" stroke-width="1.3" points="251.5,705.5 251.5,667.5 278.5,667.5 278.5,692.5 303.5,692.5 303.5,693.5 328.5,693.5 328.5,701.5 352.5,701.5 352.5,689.5 377.5,689.5 377.5,666.5 402.5,666.5 402.5,697.5 427.5,697.5 427.5,703.5 476.5,703.5 476.5,663.5 525.5,663.5 525.5,666.5 575.5,666.5 575.5,663.5 600.5,663.5 600.5,661.5 625.5,661.5 625.5,658.5 674.5,658.5 674.5,676.5 699.5,676.5 699.5,681.5 724.5,681.5 724.5,661.5 749.5,661.5 749.5,663.5 774.5,663.5 774.5,677.5 799.5,677.5 799.5,679.5 824.5,679.5 824.5,672.5 848.5,672.5 848.5,674.5 873.5,674.5 873.5,673.5 898.5,673.5 898.5,676.5 923.5,676.5 923.5,669.5 947.5,669.5 947.5,668.5 972.5,668.5 972.5,672.5 997.5,672.5 997.5,664.5 1011.5,664.5"/><polyline fill="none" stroke="#008000" stroke-width="1.3" points="251.5,754.5 303.5,754.5 303.5,746.5 328.5,746.5 328.5,754.5 451.5,754.5 451.5,727.5 476.5,727.5 476.5,707.5 625.5,707.5 625.5,721.5 650.5,721.5 650.5,707.5 699.5,707.5 699.5,754.5 724.5,754.5 724.5,751.5 749.5,751.5 749.5,750.5 774.5,750.5 774.5,746.5 799.5,746.5 799.5,731.5 824.5,731.5 824.5,741.5 848.5,741.5 848.5,750.5 873.5,750.5 873.5,751.5 898.5,751.5 898.5,752.5 923.5,752.5 923.5,749.5 947.5,749.5 947.5,707.5 972.5,707.5 972.5,729.5 997.5,729.5 997.5,731.5 1011.5,731.5"/><rect x="266" y="801" width="2" height="3" fill="#70a2e3"/><rect x="469" y="801" width="1" height="3" fill="#f1c453"/><rect x="470" y="794" width="1" height="10" fill="#b8b8b8"/><rect x="471" y="756" width="3" height="48" fill="#b8b8b8"/><rect x="474" y="778" width="1" height="26" fill="#b8b8b8"/><rect x="476" y="798" width="1" height="6" fill="#f1c453"/><rect x="477" y="776" width="2" height="28" fill="#70a2e3"/><rect x="479" y="778" width="1" height="26" fill="#b8b8b8"/><rect x="481" y="756" width="2" height="48" fill="#70a2e3"/><rect x="483" y="765" width="1" height="39" fill="#70a2e3"/><rect x="484" y="756" width="2" height="48" fill="#70a2e3"/><rect x="486" y="756" width="2" height="48" fill="#b8b8b8"/><rect x="486" y="778" width="2" height="26" fill="#9a7ee6"/><rect x="488" y="756" width="84" height="48" fill="#9a7ee6"/><rect x="572" y="766" width="1" height="38" fill="#b8b8b8"/><rect x="573" y="773" width="1" height="31" fill="#71b362"/><rect x="574" y="787" width="1" height="17" fill="#b8b8b8"/><rect x="575" y="790" width="1" height="14" fill="#70a2e3"/><rect x="586" y="756" width="2" height="48" fill="#9a7ee6"/><rect x="585" y="776" width="4" height="28" fill="#9a7ee6"/><rect x="589" y="756" width="15" height="48" fill="#9a7ee6"/><rect x="604" y="760" width="2" height="44" fill="#9a7ee6"/><rect x="605" y="762" width="2" height="42" fill="#b8b8b8"/><rect x="610" y="796" width="1" height="8" fill="#b8b8b8"/><rect x="606" y="797" width="1" height="7" fill="#71b362"/><rect x="621" y="799" width="1" height="5" fill="#9a7ee6"/><rect x="623" y="794" width="1" height="10" fill="#71b362"/><rect x="617" y="787" width="1" height="17" fill="#f1c453"/><rect x="618" y="795" width="1" height="9" fill="#f1c453"/><rect x="622" y="762" width="1" height="42" fill="#b8b8b8"/><rect x="627" y="756" width="4" height="48" fill="#b8b8b8"/><rect x="638" y="775" width="2" height="29" fill="#f1c453"/><rect x="639" y="757" width="1" height="47" fill="#f1c453"/><rect x="641" y="756" width="4" height="48" fill="#9a7ee6"/><rect x="645" y="772" width="1" height="32" fill="#9a7ee6"/><rect x="646" y="798" width="1" height="6" fill="#9a7ee6"/><rect x="647" y="780" width="2" height="24" fill="#f1c453"/><rect x="650" y="756" width="6" height="48" fill="#9a7ee6"/><rect x="656" y="758" width="1" height="46" fill="#b8b8b8"/><rect x="656" y="770" width="2" height="34" fill="#f1c453"/><rect x="659" y="796" width="1" height="8" fill="#b8b8b8"/><rect x="661" y="798" width="1" height="6" fill="#b8b8b8"/><rect x="663" y="799" width="1" height="5" fill="#9a7ee6"/><rect x="666" y="764" width="1" height="40" fill="#b8b8b8"/><rect x="666" y="776" width="2" height="28" fill="#f1c453"/><rect x="714" y="785" width="2" height="19" fill="#b8b8b8"/><rect x="723" y="790" width="1" height="14" fill="#9a7ee6"/><rect x="724" y="756" width="7" height="48" fill="#9a7ee6"/><rect x="730" y="756" width="2" height="48" fill="#b8b8b8"/><rect x="731" y="787" width="2" height="17" fill="#71b362"/><rect x="739" y="787" width="7" height="17" fill="#9a7ee6"/><rect x="740" y="756" width="5" height="48" fill="#9a7ee6"/><rect x="745" y="762" width="1" height="42" fill="#b8b8b8"/><rect x="746" y="790" width="2" height="14" fill="#f1c453"/><rect x="754" y="790" width="3" height="14" fill="#f1c453"/><rect x="754" y="772" width="3" height="32" fill="#f1c453"/><rect x="755" y="765" width="1" height="39" fill="#f1c453"/><rect x="758" y="790" width="1" height="14" fill="#b8b8b8"/><rect x="769" y="789" width="2" height="15" fill="#f1c453"/><rect x="777" y="790" width="1" height="14" fill="#b8b8b8"/><rect x="778" y="784" width="1" height="20" fill="#f1c453"/><rect x="787" y="778" width="2" height="26" fill="#b8b8b8"/><rect x="791" y="796" width="1" height="8" fill="#b8b8b8"/><rect x="793" y="774" width="1" height="30" fill="#f1c453"/><rect x="795" y="784" width="1" height="20" fill="#b8b8b8"/><rect x="794" y="800" width="2" height="4" fill="#9a7ee6"/><rect x="809" y="792" width="1" height="12" fill="#f1c453"/><rect x="846" y="799" width="1" height="5" fill="#f1c453"/><rect x="850" y="799" width="2" height="5" fill="#f1c453"/><rect x="884" y="795" width="1" height="9" fill="#f1c453"/><rect x="908" y="800" width="1" height="4" fill="#f1c453"/><rect x="586" y="805" width="425" height="16" fill="#b3e994"/><rect x="589" y="805" width="16" height="16" fill="#ff5040"/><rect x="10" y="681" width="36" height="1" fill="#ff8000"/><text x="50" y="686" fill="#000">CPU Utilization</text><rect x="10" y="730" width="36" height="1" fill="#008000"/><text x="50" y="735" fill="#000">Bandwidth In (0 - 5,000 Kbps)</text><text x="50" y="784" fill="#000">Browser Main Thread</text><text x="50" y="817" fill="#000">Long Tasks</text><rect x="0" y="36" width="1012" height="1" fill="#000"/><rect x="0" y="36" width="1" height="786" fill="#000"/><rect x="1011" y="36" width="1" height="786" fill="#000"/><rect x="250" y="36" width="1" height="786" fill="#000"/><rect x="0" y="657" width="1012" height="1" fill="#000"/><rect x="0" y="706" width="1012" height="1" fill="#000"/><rect x="0" y="755" width="1012" height="1" fill="#000"/><rect x="0" y="804" width="1012" height="1" fill="#000"/><rect x="0" y="821" width="1012" height="1" fill="#000"/></svg></body></html>
